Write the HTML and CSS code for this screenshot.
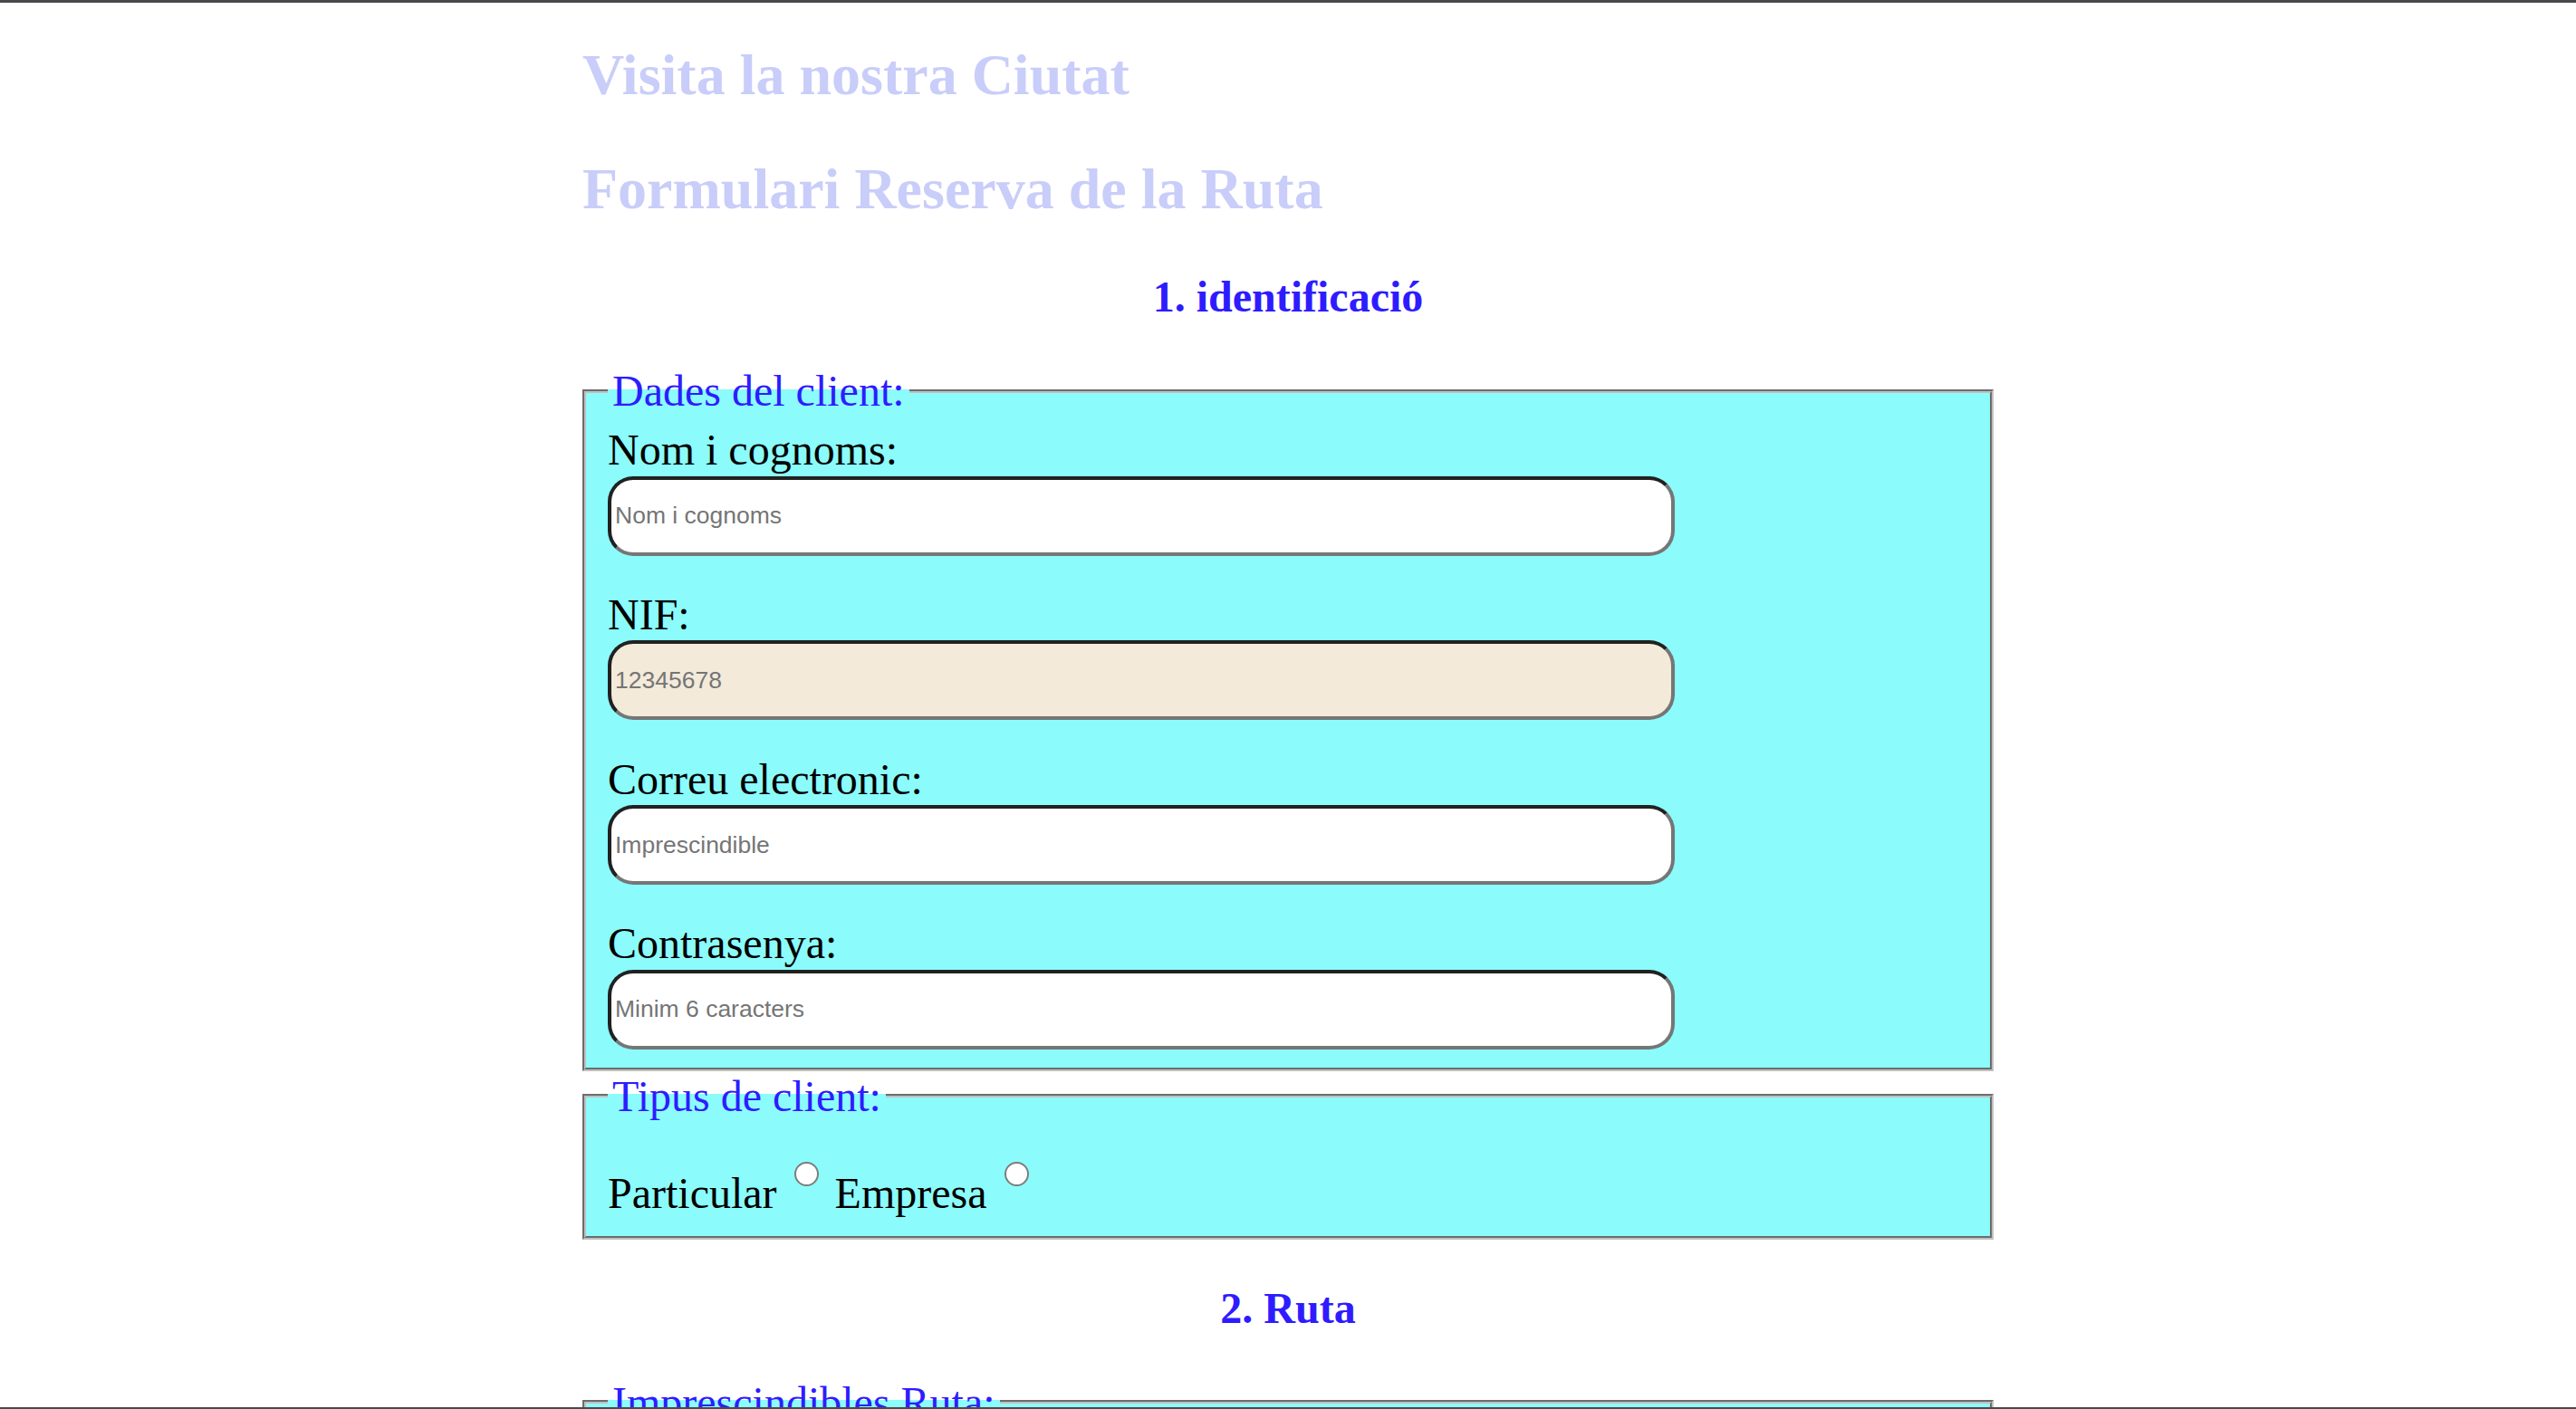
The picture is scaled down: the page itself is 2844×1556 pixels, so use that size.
FILE: index.html
```html
<!DOCTYPE html>
<html lang="ca">
<head>
<meta charset="utf-8">
<title>Visita la nostra Ciutat</title>
<link rel="stylesheet" href="styles.css">
</head>
<body>
<div class="frame-top"></div>
<div class="frame-bottom"></div>
<main class="page">
  <h1 class="site-title">Visita la nostra Ciutat</h1>
  <h2 class="form-title">Formulari Reserva de la Ruta</h2>
  <h3 class="step">1. identificació</h3>
  <form class="form">
    <fieldset class="box">
      <legend>Dades del client:</legend>
      <div class="field">
        <label for="nom">Nom i cognoms:</label>
        <input class="text" id="nom" type="text" placeholder="Nom i cognoms">
      </div>
      <div class="field">
        <label for="nif">NIF:</label>
        <input class="text nif" id="nif" type="text" placeholder="12345678">
      </div>
      <div class="field">
        <label for="correu">Correu electronic:</label>
        <input class="text" id="correu" type="email" placeholder="Imprescindible">
      </div>
      <div class="field">
        <label for="pass">Contrasenya:</label>
        <input class="text" id="pass" type="password" placeholder="Minim 6 caracters">
      </div>
    </fieldset>
    <fieldset class="box tipus">
      <legend>Tipus de client:</legend>
      <div class="radios">Particular <input class="radio" type="radio" name="tipus" value="particular"> Empresa <input class="radio" type="radio" name="tipus" value="empresa"></div>
    </fieldset>
    <h3 class="step">2. Ruta</h3>
    <fieldset class="box">
      <legend>Imprescindibles Ruta:</legend>
      <div class="field">
        <label for="data">Data de la ruta:</label>
        <input class="text" id="data" type="text" placeholder="dd/mm/aaaa">
      </div>
      <div class="field">
        <label for="persones">Nombre de persones:</label>
        <input class="text" id="persones" type="text" placeholder="1">
      </div>
    </fieldset>
  </form>
</main>
</body>
</html>
```

FILE: styles.css
```css
html, body {
  margin: 0;
  padding: 0;
  background: #ffffff;
}

body {
  font-family: "Liberation Serif", "Times New Roman", serif;
  color: #000000;
}

.frame-top {
  position: fixed;
  left: 0;
  right: 0;
  top: 0;
  height: 3px;
  background: #46484b;
  z-index: 10;
}

.frame-bottom {
  position: fixed;
  left: 0;
  right: 0;
  bottom: 0;
  height: 2px;
  background: #4a4a4a;
  z-index: 10;
}

.page {
  width: 1558px;
  margin: 0 auto;
  padding-top: 1px;
}

.site-title,
.form-title {
  font-family: "Liberation Serif", "Times New Roman", serif;
  font-size: 64px;
  line-height: 74px;
  font-weight: bold;
  color: #c9cdf9;
}

.site-title {
  margin: 45px 0 52px;
}

.form-title {
  margin: 0 0 54px;
}

.step {
  font-family: "Liberation Serif", "Times New Roman", serif;
  font-size: 48px;
  line-height: 55px;
  font-weight: bold;
  color: #2e1cff;
  text-align: center;
  margin: 48px 0 49px;
}

.form {
  margin: 0;
}

.box {
  margin: 0;
  padding: 10px 24px 20px;
  border: 4px groove #c0c0c0;
  background: #8bfbfb;
  min-width: 0;
}

.box legend {
  padding: 0 5px;
  font-family: "Liberation Serif", "Times New Roman", serif;
  font-size: 48px;
  line-height: 55px;
  color: #2e1cff;
}

.field + .field {
  margin-top: 37.3px;
}

.field label {
  display: block;
  font-size: 48px;
  line-height: 55px;
}

.text {
  display: block;
  box-sizing: border-box;
  width: 1178px;
  height: 88px;
  margin: 1.5px 0 0;
  padding: 0 4px;
  border: 4px inset #767676;
  border-radius: 28px;
  background: #ffffff;
  font-family: "Liberation Sans", Arial, sans-serif;
  font-size: 26.5px;
  color: #000000;
  outline: none;
}

.text::placeholder {
  color: #757575;
  opacity: 1;
}

.nif {
  background: #f3eada;
}

.radios {
  font-size: 48px;
  line-height: 55px;
  padding: 35px 0 0;
}

.radio {
  -webkit-appearance: none;
  appearance: none;
  display: inline-block;
  box-sizing: border-box;
  width: 27px;
  height: 27px;
  margin: 0 6px 0 7px;
  border: 2px solid #7d7d7d;
  border-radius: 50%;
  background: #ffffff;
  vertical-align: 24px;
}
```
